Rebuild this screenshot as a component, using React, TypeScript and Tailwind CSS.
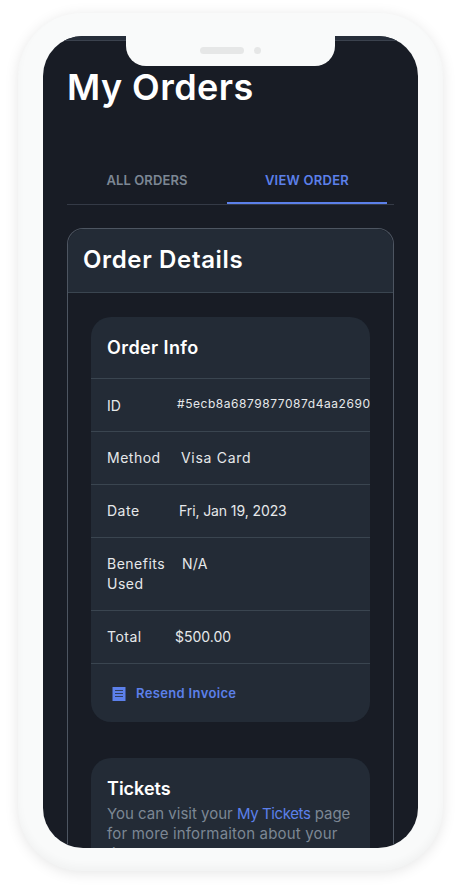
const font = { fontFamily: "Inter, 'Noto Sans', sans-serif" };

function ReceiptIcon() {
    return (
        <svg width="14" height="14" viewBox="0 0 14 14" className="shrink-0">
            <rect x="1" y="0" width="12" height="14" fill="#5c80ea" />
            <path d="M0 1h14M0 3h14M0 5h14M0 7h14M0 9h14M0 11h14M0 13h14" stroke="#5c80ea" strokeWidth="1" />
            <path d="M3 3.5h8M3 6.5h8M3 9.5h8" stroke="#2f3d5c" strokeWidth="1" />
        </svg>
    );
}

function InfoRow({ label, value, labelWidth, valueClass }: { label: string; value: string; labelWidth: string; valueClass: string }) {
    return (
        <div className="flex px-4 pt-[16px] pb-[16px] border-b border-[#3a4550] text-[14px] leading-[20px] text-[#e6e8ea]">
            <div className={`${labelWidth} shrink-0 tracking-[0.5px]`}>{label}</div>
            <div className={`whitespace-nowrap ${valueClass}`}>{value}</div>
        </div>
    );
}

export default function App() {
    return (
        <div className="w-[461px] h-[896px] overflow-hidden bg-white pt-[13px] pl-[18px]" style={font}>
            {/* Phone shell */}
            <div className="w-[425px] h-[858px] rounded-[64px] bg-[#f9fafa] shadow-[0_2px_14px_rgba(0,0,0,0.10),inset_0_-5px_8px_rgba(0,0,0,0.03)] pt-[23px] pl-[25px]">
                <div className="relative w-[375px] h-[812px] rounded-[40px] overflow-hidden bg-[#181c25]">
                    <div className="h-[5px] bg-[#262d39] border-b border-[#3b424e]" />

                    {/* Notch */}
                    <div className="absolute top-0 left-[83px] w-[209px] h-[30px] bg-[#f9fafa] rounded-b-[20px] flex items-center justify-center gap-[10px] pb-[2px] pr-[1px]">
                        <div className="w-[44px] h-[7px] rounded-full bg-[#e6e7e7]" />
                        <div className="w-[7px] h-[7px] rounded-full bg-[#e6e7e7]" />
                    </div>

                    <div className="pl-[24px] pr-[24px]">
                        <h1 className="mt-[20px] text-[36px] leading-[52px] font-semibold text-white tracking-[0.45px]">My Orders</h1>

                        {/* Tabs */}
                        <div className="mt-[46px] flex h-[46px] border-b border-[#343a46] text-[13px] font-semibold">
                            <div className="w-[160px] h-[45px] flex items-center justify-center border-b-[2px] border-transparent text-[#7c8794] tracking-[0.1px]">ALL ORDERS</div>
                            <div className="w-[160px] h-[45px] flex items-center justify-center border-b-[2px] border-[#5c80ea] text-[#5c80ea] tracking-[0.25px]">VIEW ORDER</div>
                        </div>

                        {/* Order details */}
                        <div className="mt-[23px] rounded-t-[16px] border border-b-0 border-[#4d5561] h-[640px]">
                            <div className="h-[64px] bg-[#232b36] rounded-t-[16px] border-b border-[#3a4550] flex items-center pl-[15px]">
                                <h2 className="text-[24px] font-semibold text-white tracking-[0.65px] -mt-[1px]">Order Details</h2>
                            </div>

                            <div className="pt-[24px] px-[23px]">
                                <div className="rounded-[20px] bg-[#232b36] overflow-hidden">
                                    <div className="h-[62px] border-b border-[#3a4550] flex items-center px-4 text-[18px] font-semibold text-white tracking-[0.4px]">Order Info</div>
                                    <div className="flex items-center h-[53px] px-4 border-b border-[#3a4550] text-[14px] text-[#e6e8ea]">
                                        <div className="w-[70px] shrink-0">ID</div>
                                        <div className="whitespace-nowrap text-[12px] tracking-[0.55px] -mt-[3px]">#5ecb8a6879877087d4aa2690</div>
                                    </div>
                                    <InfoRow label="Method" value="Visa Card" labelWidth="w-[74px]" valueClass="tracking-[0.7px]" />
                                    <InfoRow label="Date" value="Fri, Jan 19, 2023" labelWidth="w-[72px]" valueClass="tracking-[-0.1px]" />
                                    <InfoRow label="Benefits Used" value="N/A" labelWidth="w-[75px]" valueClass="tracking-[0.3px]" />
                                    <InfoRow label="Total" value="$500.00" labelWidth="w-[68px]" valueClass="" />
                                    <div className="h-[58px] flex items-center pl-[21px] pt-[1px] gap-[10px] text-[13px] font-semibold text-[#5c80ea] tracking-[0.35px]">
                                        <ReceiptIcon />
                                        <span>Resend Invoice</span>
                                    </div>
                                </div>

                                <div className="mt-[36px] rounded-t-[20px] bg-[#232b36] h-[200px] px-4 pt-[18px]">
                                    <h3 className="text-[18px] leading-[28px] font-semibold text-white -mt-[1px]">Tickets</h3>
                                    <p className="pt-[1px] text-[15px] leading-[20px] text-[#7c8794] whitespace-nowrap">
                                        You can visit your <span className="text-[#5c80ea] tracking-[-0.4px]">My Tickets</span> page
                                        <br />
                                        <span className="tracking-[0.17px]">for more informaiton about your</span>
                                        <br />
                                        tickets.
                                    </p>
                                </div>
                            </div>
                        </div>
                    </div>
                </div>
            </div>
        </div>
    );
}
